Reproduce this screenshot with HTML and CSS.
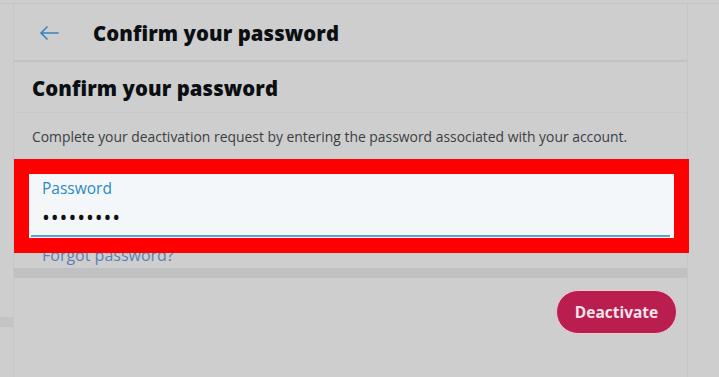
FILE: index.html
```html
<!DOCTYPE html>
<html lang="en">
<head>
<meta charset="utf-8">
<title>Confirm your password</title>
<link rel="stylesheet" href="styles.css">
</head>
<body>
<div class="page">
  <aside class="side-left">
    <div class="side-left-band"></div>
  </aside>
  <main class="main">
    <header class="topbar">
      <svg class="back" width="20" height="14" viewBox="0 0 20 14" aria-hidden="true">
        <path d="M19 7H2M8 1L2 7l6 6" fill="none" stroke="#3a84c4" stroke-width="1.7" stroke-linecap="round" stroke-linejoin="round"/>
      </svg>
      <h1 class="topbar-title">Confirm your password</h1>
    </header>
    <section class="section-head">
      <h2 class="section-title">Confirm your password</h2>
    </section>
    <p class="desc">Complete your deactivation request by entering the password associated with your account.</p>
    <div class="highlight">
      <div class="field">
        <div class="field-label">Password</div>
        <div class="field-value">•••••••••</div>
        <div class="field-line"></div>
      </div>
    </div>
    <a class="forgot" href="#">Forgot password?</a>
    <div class="band"></div>
    <div class="actions">
      <button class="deactivate" type="button">Deactivate</button>
    </div>
  </main>
  <aside class="side-right"></aside>
</div>
</body>
</html>
```

FILE: styles.css
```css
* { box-sizing: border-box; }
html, body {
  margin: 0;
  padding: 0;
  background: #cecece;
}
body {
  font-family: "Open Sans", "Noto Sans", sans-serif;
  width: 719px;
  height: 377px;
  overflow: hidden;
}
.page {
  display: flex;
  height: 377px;
  padding-top: 3px;
}
.side-left {
  width: 14px;
  flex: none;
  border-top: 1px solid #c3c3c3;
  border-right: 1px solid #c6c6c6;
  display: flex;
  flex-direction: column;
  padding-top: 313px;
}
.side-left-band {
  height: 10px;
  background: #c2c4c5;
}
.main {
  width: 674px;
  flex: none;
  border-top: 1px solid #c3c3c3;
  border-right: 1px solid #c6c6c6;
  display: flex;
  flex-direction: column;
}
.side-right {
  flex: 1;
  border-top: 1px solid #c3c3c3;
}
.topbar {
  height: 58px;
  display: flex;
  align-items: center;
  border-bottom: 2px solid #c2c2c2;
  padding-left: 25px;
}
.back {
  display: block;
  margin-top: 1px;
}
.topbar-title {
  margin: 2px 0 0 34px;
  font-size: 20.3px;
  font-weight: 800;
  color: #0c0f12;
  letter-spacing: 0.1px;
}
.section-head {
  height: 51px;
  display: flex;
  align-items: center;
  padding-left: 18px;
  border-bottom: 1px solid #c9c9c9;
}
.section-title {
  margin: 2px 0 0;
  font-size: 20.3px;
  font-weight: 800;
  color: #0c0f12;
  letter-spacing: 0.1px;
}
.desc {
  margin: 0;
  padding: 14px 18px 0;
  height: 46px;
  font-size: 13.9px;
  letter-spacing: 0;
  color: #3a3e43;
}
.highlight {
  position: relative;
  z-index: 1;
  margin-right: -2px;
  border: 15px solid #ff0000;
  height: 94px;
}
.field {
  height: 64px;
  background: #f4f7fa;
  padding: 4px 0 0 13px;
  display: flex;
  flex-direction: column;
}
.field-label {
  font-size: 15.5px;
  color: #2b8ac4;
  line-height: 20px;
}
.field-value {
  font-size: 21px;
  color: #111;
  letter-spacing: 0.9px;
  line-height: 24px;
  margin-top: 7px;
  height: 30px;
}
.field-line {
  height: 2px;
  background: #5aa6d3;
  margin: 0 4px 0 -11px;
}
.forgot {
  display: block;
  margin: -8px 0 0 28px;
  font-size: 16px;
  line-height: 20px;
  color: #5a80b3;
  text-decoration: none;
}
.band {
  margin-top: 3px;
  height: 10px;
  background: #bfc1c3;
}
.actions {
  display: flex;
  justify-content: flex-end;
  padding: 12px 10px 0 0;
}
.deactivate {
  width: 121px;
  height: 44px;
  border-radius: 22px;
  border: 1px solid #f0c6d3;
  background: #b91e4f;
  color: #f7e3ea;
  font-family: "Open Sans", "Noto Sans", sans-serif;
  font-size: 15.5px;
  font-weight: 700;
  padding: 0;
}
```
